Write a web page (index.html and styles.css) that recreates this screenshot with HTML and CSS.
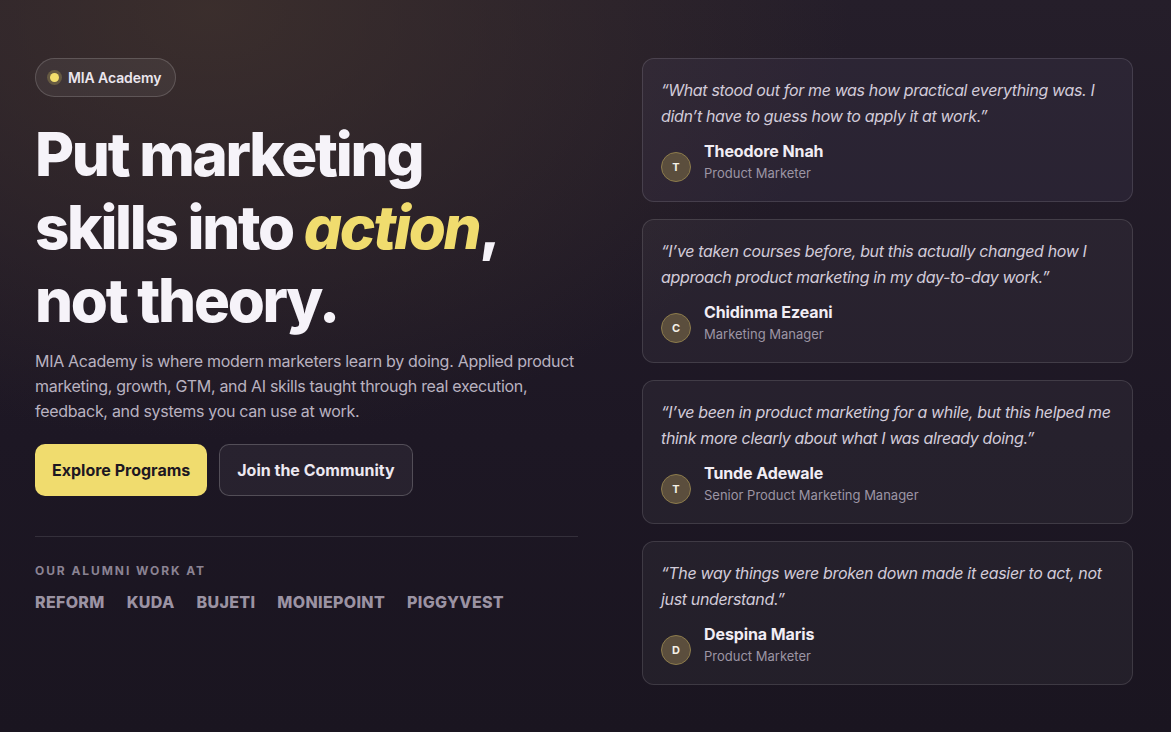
FILE: index.html
```html
<!DOCTYPE html>
<html lang="en">
<head>
<meta charset="utf-8">
<title>MIA Academy</title>
<link rel="stylesheet" href="styles.css">
</head>
<body>
<main class="hero">
  <section class="intro">
    <div class="badge"><span class="dot"></span>MIA Academy</div>
    <h1 class="title">Put marketing skills into <em class="accent">action</em>, not theory.</h1>
    <p class="lead">MIA Academy is where modern marketers learn by doing. Applied product marketing, growth, GTM, and AI skills taught through real execution, feedback, and systems you can use at work.</p>
    <div class="actions">
      <a class="btn btn-primary" href="#">Explore Programs</a>
      <a class="btn btn-ghost" href="#">Join the Community</a>
    </div>
    <hr class="divider">
    <p class="alumni-label">OUR ALUMNI WORK AT</p>
    <ul class="logos">
      <li>REFORM</li>
      <li>KUDA</li>
      <li>BUJETI</li>
      <li>MONIEPOINT</li>
      <li>PIGGYVEST</li>
    </ul>
  </section>
  <section class="testimonials">
    <article class="card">
      <p class="quote">“What stood out for me was how practical everything was. I didn’t have to guess how to apply it at work.”</p>
      <div class="author">
        <span class="avatar">T</span>
        <div class="who"><div class="name">Theodore Nnah</div><div class="role">Product Marketer</div></div>
      </div>
    </article>
    <article class="card">
      <p class="quote">“I’ve taken courses before, but this actually changed how I approach product marketing in my day-to-day work.”</p>
      <div class="author">
        <span class="avatar">C</span>
        <div class="who"><div class="name">Chidinma Ezeani</div><div class="role">Marketing Manager</div></div>
      </div>
    </article>
    <article class="card">
      <p class="quote">“I’ve been in product marketing for a while, but this helped me think more clearly about what I was already doing.”</p>
      <div class="author">
        <span class="avatar">T</span>
        <div class="who"><div class="name">Tunde Adewale</div><div class="role">Senior Product Marketing Manager</div></div>
      </div>
    </article>
    <article class="card">
      <p class="quote">“The way things were broken down made it easier to act, not just understand.”</p>
      <div class="author">
        <span class="avatar">D</span>
        <div class="who"><div class="name">Despina Maris</div><div class="role">Product Marketer</div></div>
      </div>
    </article>
  </section>
</main>
</body>
</html>
```

FILE: styles.css
```css
* { box-sizing: border-box; }
html, body { margin: 0; padding: 0; }
body {
  width: 1171px;
  height: 732px;
  overflow: hidden;
  font-family: Inter, "Noto Sans", sans-serif;
  color: #f4f1f7;
  background:
    radial-gradient(ellipse 640px 430px at 210px 10px, rgba(64, 50, 45, 0.8), rgba(64, 50, 45, 0) 100%),
    linear-gradient(180deg, #251e2a 0%, #1d1724 60%, #1a1520 100%);
}
.hero {
  display: grid;
  grid-template-columns: 543px 491px;
  column-gap: 64px;
  padding: 58px 38px 0 35px;
}
.intro { display: flex; flex-direction: column; align-items: flex-start; }
.badge {
  display: inline-flex;
  align-items: center;
  gap: 9px;
  height: 39px;
  padding: 0 14px 0 14px;
  border-radius: 20px;
  border: 1px solid rgba(255, 255, 255, 0.16);
  background: rgba(255, 255, 255, 0.06);
  font-size: 14px;
  font-weight: 600;
  letter-spacing: -0.1px;
  color: #ebe6ee;
}
.dot {
  width: 9px;
  height: 9px;
  border-radius: 50%;
  background: #f2de6c;
  box-shadow: 0 0 0 3px rgba(242, 222, 108, 0.22);
}
.title {
  margin: 21px 0 0;
  font-size: 60px;
  line-height: 73px;
  font-weight: 800;
  letter-spacing: -0.038em;
  color: #f6f3f9;
  max-width: 520px;
}
.accent { color: #f0dc6e; font-style: italic; }
.lead {
  margin: 12px 0 0;
  font-size: 16px;
  line-height: 25px;
  letter-spacing: -0.3px;
  color: #b9b2c0;
  max-width: 543px;
}
.actions { display: flex; gap: 12px; margin-top: 20px; }
.btn {
  display: inline-flex;
  align-items: center;
  height: 52px;
  padding: 0 17px;
  border-radius: 10px;
  font-size: 16px;
  font-weight: 700;
  text-decoration: none;
}
.btn-primary { background: #f0dc6e; color: #1d1722; }
.btn-ghost {
  background: rgba(255, 255, 255, 0.05);
  border: 1px solid rgba(255, 255, 255, 0.2);
  color: #ece8f0;
}
.divider {
  align-self: stretch;
  margin: 40px 0 0;
  border: 0;
  border-top: 1px solid rgba(255, 255, 255, 0.11);
}
.alumni-label {
  margin: 26px 0 0;
  font-size: 12px;
  line-height: 16px;
  font-weight: 700;
  letter-spacing: 0.16em;
  color: #8b8393;
}
.logos {
  display: flex;
  gap: 22px;
  list-style: none;
  margin: 13px 0 0;
  padding: 0;
  font-size: 16px;
  line-height: 20px;
  font-weight: 800;
  letter-spacing: 0.02em;
  color: #9b93a3;
}
.testimonials { display: flex; flex-direction: column; gap: 17px; }
.card {
  height: 144px;
  padding: 18px 16px 19px 18px;
  border-radius: 12px;
  border: 1px solid rgba(255, 255, 255, 0.12);
  background: rgba(255, 255, 255, 0.045);
}
.testimonials .card:first-child { background: rgba(120, 105, 160, 0.1); }
.quote {
  margin: 0;
  font-size: 16px;
  line-height: 26px;
  font-style: italic;
  letter-spacing: -0.35px;
  color: #d2cbd9;
}
.author { display: flex; align-items: center; gap: 13px; margin-top: 11px; }
.avatar {
  flex: none;
  width: 30px;
  height: 30px;
  border-radius: 50%;
  display: flex;
  align-items: center;
  justify-content: center;
  background: #5b4e3d;
  border: 1px solid #8d7c4c;
  font-size: 11px;
  font-weight: 700;
  color: #f4f0e6;
  margin-top: 12px;
}
.name { font-size: 16px; line-height: 20px; font-weight: 700; letter-spacing: -0.1px; color: #f1edf4; }
.role { font-size: 13px; line-height: 16px; margin-top: 4px; color: #9c95a4; }
```
